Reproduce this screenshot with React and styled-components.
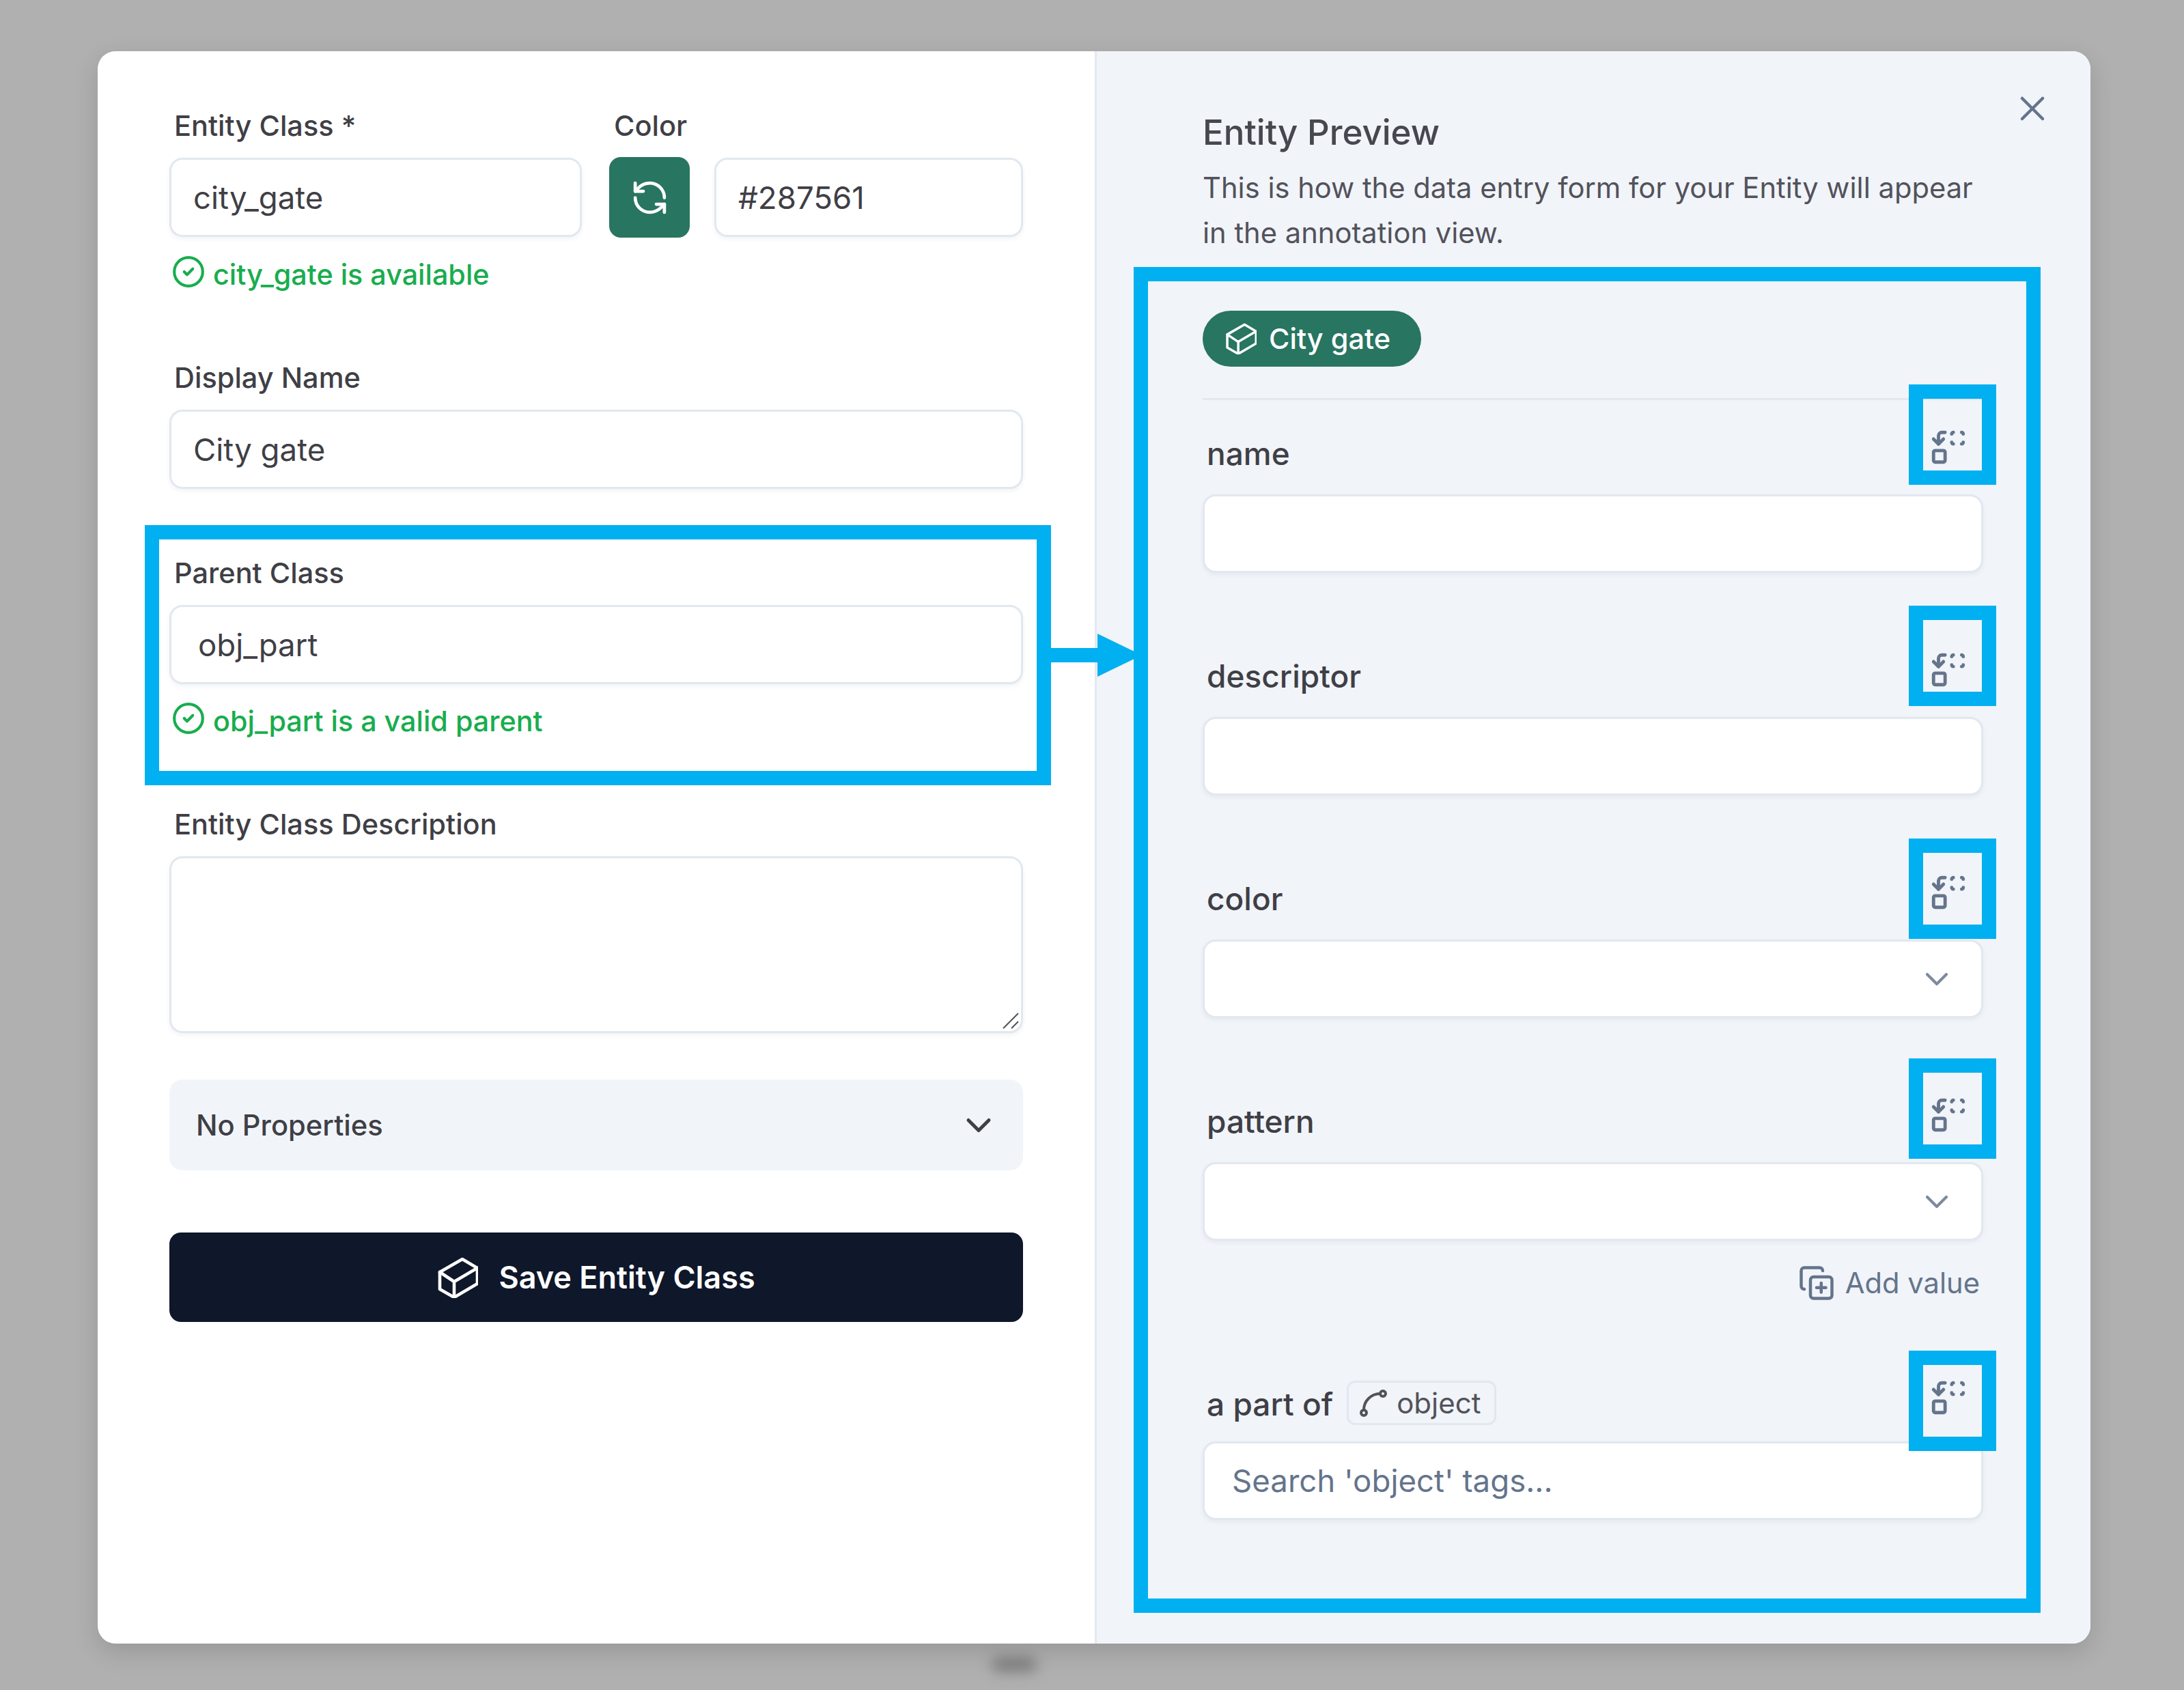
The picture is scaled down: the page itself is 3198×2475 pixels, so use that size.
import React from 'react';
import styled, { createGlobalStyle } from 'styled-components';
import { RefreshCcw, CircleCheck, ChevronDown, X, Replace, CopyPlus, Spline } from 'lucide-react';

const Global = createGlobalStyle`
  html, body { margin: 0; padding: 0; background: #b0b0b0; }
  * { box-sizing: border-box; }
  body { font-family: Inter, "Liberation Sans", sans-serif; }
`;

const Page = styled.div`
  position: relative;
  width: 3198px;
  height: 2475px;
  padding: 75px 137px 68px 143px;
  background: #b0b0b0;
  overflow: hidden;
`;

const BackdropSmudge = styled.div`
  position: absolute;
  left: 1452px;
  top: 2426px;
  width: 66px;
  height: 22px;
  border-radius: 11px;
  background: #7a7a7a;
  filter: blur(10px);
`;

const Modal = styled.div`
  position: relative;
  display: flex;
  width: 2918px;
  height: 2332px;
  border-radius: 26px;
  background: #fff;
  overflow: hidden;
  box-shadow: 0 12px 36px rgba(0, 0, 0, 0.14);
`;

const FormPane = styled.div`
  width: 1460px;
  padding: 79px 105px 0;
  display: flex;
  flex-direction: column;
`;

const PreviewPane = styled.div`
  flex: 1;
  padding: 89px 157px 0 155px;
  background: #f1f4f9;
  border-left: 3px solid #e2e8f0;
`;

const Group = styled.div`
  margin-bottom: ${(p) => p.$mb ?? 91}px;
`;

const TopRow = styled.div`
  display: flex;
  gap: 40px;
`;

const Column = styled.div`
  width: ${(p) => p.$w}px;
`;

const Label = styled.div`
  height: 60px;
  margin-bottom: 17px;
  padding-left: 7px;
  font-size: 41.5px;
  font-weight: 500;
  line-height: 60px;
  color: #3f3f46;
`;

const InputBox = styled.div`
  display: flex;
  align-items: center;
  justify-content: space-between;
  width: 100%;
  height: ${(p) => p.$h ?? 116}px;
  padding-left: ${(p) => p.$pl ?? 32}px;
  padding-right: 37px;
  background: #fff;
  border: 3px solid #e2e8f0;
  border-radius: 19px;
  box-shadow: 0 3px 7px rgba(15, 23, 42, 0.05);
  font-size: 45.6px;
  color: ${(p) => (p.$muted ? '#64748b' : '#3f3f46')};
`;

const TextArea = styled(InputBox)`
  position: relative;
  height: 259px;
`;

const ResizeGrip = styled.svg`
  position: absolute;
  right: 2px;
  bottom: 2px;
  width: 28px;
  height: 28px;
`;

const ColorRow = styled.div`
  display: flex;
  gap: 36px;
`;

const ColorButton = styled.div`
  flex: none;
  display: flex;
  align-items: center;
  justify-content: center;
  width: 118px;
  height: 118px;
  margin-top: -1px;
  border-radius: 17px;
  background: #287561;
  color: #fff;
`;

const Help = styled.div`
  display: flex;
  align-items: center;
  gap: 11px;
  height: 60px;
  margin-top: 24px;
  padding-left: 3px;
  font-size: 41.3px;
  font-weight: 500;
  color: #18ad4e;
`;

const HelpIcon = styled(CircleCheck)`
  margin-top: -8px;
`;

const Accordion = styled.div`
  display: flex;
  align-items: center;
  justify-content: space-between;
  height: 133px;
  margin-bottom: 91px;
  padding: 0 35px 0 39px;
  border-radius: 19px;
  background: #f1f5f9;
  font-size: 41.7px;
  font-weight: 500;
  color: #3f3f46;
`;

const SaveButton = styled.div`
  display: flex;
  align-items: center;
  justify-content: center;
  gap: 30px;
  height: 131px;
  border-radius: 17px;
  background: #0f172a;
  color: #fff;
  font-size: 45px;
  font-weight: 600;
`;

const Title = styled.div`
  height: 60px;
  font-size: 51px;
  font-weight: 500;
  line-height: 60px;
  color: #47474f;
`;

const Description = styled.div`
  margin-top: 18px;
  font-size: 41.7px;
  line-height: 66px;
  white-space: nowrap;
  color: #52525b;
`;

const Pill = styled.div`
  display: inline-flex;
  align-items: center;
  gap: 18px;
  height: 82px;
  margin-top: 81px;
  padding: 0 45px 0 33px;
  border-radius: 41px;
  background: #287561;
  color: #fff;
  font-size: 41.5px;
  font-weight: 500;
  vertical-align: top;
`;

const Rule = styled.div`
  height: 3px;
  margin: 46px 0 38px;
  background: #e2e8f0;
`;

const FieldHead = styled.div`
  display: flex;
  justify-content: space-between;
  align-items: flex-start;
  height: ${(p) => p.$h ?? 100}px;
  padding-right: 22px;
  color: #64748b;
`;

const FieldLabel = styled.div`
  height: 60px;
  margin-top: 10px;
  padding-left: 6px;
  font-size: 46px;
  font-weight: 500;
  line-height: 60px;
  color: #3f3f46;
`;

const LabelGroup = styled.div`
  display: flex;
  align-items: flex-start;
  gap: 20px;
`;

const Chip = styled.div`
  display: flex;
  align-items: center;
  gap: 10px;
  height: 65px;
  margin-top: 6px;
  padding: 0 20px 0 12px;
  border: 3px solid #e2e8f0;
  border-radius: 12px;
  font-size: 42px;
  color: #52525b;
`;

const TransferIcon = styled(Replace)`
  margin-top: 2px;
`;

const FieldBlock = styled.div`
  margin-bottom: ${(p) => p.$mb ?? 111}px;
`;

const AddValue = styled.div`
  display: flex;
  align-items: center;
  justify-content: flex-end;
  gap: 15px;
  height: 56px;
  margin: 34px 0 109px;
  padding-right: 5px;
  font-size: 41.7px;
  color: #64748b;
`;

const CloseIcon = styled(X)`
  position: absolute;
  top: 54px;
  right: 55px;
  color: #64748b;
`;

const SelectChevron = styled(ChevronDown)`
  color: #7b8a9f;
`;

const Annotation = styled.div`
  position: absolute;
  left: ${(p) => p.$x}px;
  top: ${(p) => p.$y}px;
  width: ${(p) => p.$w}px;
  height: ${(p) => p.$h}px;
  border: 21px solid #00b0f0;
  pointer-events: none;
`;

const Arrow = styled.svg`
  position: absolute;
  left: 1539px;
  top: 928px;
  width: 133px;
  height: 63px;
`;

const Cube = ({ size }) => (
  <svg width={size} height={size} viewBox="0 0 60 60" fill="none" stroke="currentColor" strokeWidth="4.6" strokeLinejoin="round" strokeLinecap="round">
    <path d="M37 3 L59 16 L59 39 L25 59 L4 47 L4 22 Z" />
    <path d="M4 22 L25 36 L59 16 M25 36 L25 59" />
  </svg>
);

const fields = [
  { name: 'name' },
  { name: 'descriptor' },
  { name: 'color', select: true },
];

const boxes = [563, 887, 1228, 1550, 1978];

export default function App() {
  return (
    <Page>
      <Global />
      <Modal>
        <FormPane>
          <TopRow>
            <Column $w={604}>
              <Label>Entity Class *</Label>
              <InputBox>city_gate</InputBox>
            </Column>
            <Column $w={606}>
              <Label>Color</Label>
              <ColorRow>
                <ColorButton>
                  <RefreshCcw size={57} strokeWidth={2} />
                </ColorButton>
                <InputBox>#287561</InputBox>
              </ColorRow>
            </Column>
          </TopRow>
          <Group>
            <Help>
              <HelpIcon size={50} strokeWidth={2} />
              city_gate is available
            </Help>
          </Group>
          <Group $mb={93}>
            <Label>Display Name</Label>
            <InputBox>City gate</InputBox>
          </Group>
          <Group>
            <Label>Parent Class</Label>
            <InputBox $pl={39}>obj_part</InputBox>
            <Help>
              <HelpIcon size={50} strokeWidth={2} />
              obj_part is a valid parent
            </Help>
          </Group>
          <Group $mb={68}>
            <Label>Entity Class Description</Label>
            <TextArea>
              <ResizeGrip viewBox="0 0 28 28" fill="none" stroke="#52525b" strokeWidth="2">
                <path d="M4 26 L26 4 M16 26 L26 16" />
              </ResizeGrip>
            </TextArea>
          </Group>
          <Accordion>
            No Properties
            <ChevronDown size={60} strokeWidth={2} />
          </Accordion>
          <SaveButton>
            <Cube size={60} />
            Save Entity Class
          </SaveButton>
        </FormPane>
        <PreviewPane>
          <Title>Entity Preview</Title>
          <Description>
            This is how the data entry form for your Entity will appear
            <br />
            in the annotation view.
          </Description>
          <Pill>
            <Cube size={46} />
            City gate
          </Pill>
          <Rule />
          {fields.map((f) => (
            <FieldBlock key={f.name}>
              <FieldHead>
                <FieldLabel>{f.name}</FieldLabel>
                <TransferIcon size={58} strokeWidth={2} />
              </FieldHead>
              <InputBox $h={115}>{f.select && <span />}{f.select && <SelectChevron size={56} strokeWidth={1.8} />}</InputBox>
            </FieldBlock>
          ))}
          <FieldBlock $mb={0}>
            <FieldHead>
              <FieldLabel>pattern</FieldLabel>
              <TransferIcon size={58} strokeWidth={2} />
            </FieldHead>
            <InputBox $h={115}>
              <span />
              <SelectChevron size={56} strokeWidth={1.8} />
            </InputBox>
          </FieldBlock>
          <AddValue>
            <CopyPlus size={54} strokeWidth={2} />
            Add value
          </AddValue>
          <FieldBlock $mb={0}>
            <FieldHead $h={95}>
              <LabelGroup>
                <FieldLabel>a part of</FieldLabel>
                <Chip>
                  <Spline size={48} strokeWidth={2} />
                  object
                </Chip>
              </LabelGroup>
              <TransferIcon size={58} strokeWidth={2} />
            </FieldHead>
            <InputBox $h={115} $pl={40} $muted>
              Search 'object' tags...
            </InputBox>
          </FieldBlock>
        </PreviewPane>
        <CloseIcon size={60} strokeWidth={1.8} />
      </Modal>
      <BackdropSmudge />
      <Annotation $x={212} $y={769} $w={1327} $h={381} />
      <Annotation $x={1660} $y={391} $w={1328} $h={1971} />
      {boxes.map((y) => (
        <Annotation key={y} $x={2795} $y={y} $w={128} $h={147} />
      ))}
      <Arrow viewBox="0 0 133 63">
        <path d="M0 21 H68 V0 L133 31.5 L68 63 V42 H0 Z" fill="#00b0f0" />
      </Arrow>
    </Page>
  );
}
